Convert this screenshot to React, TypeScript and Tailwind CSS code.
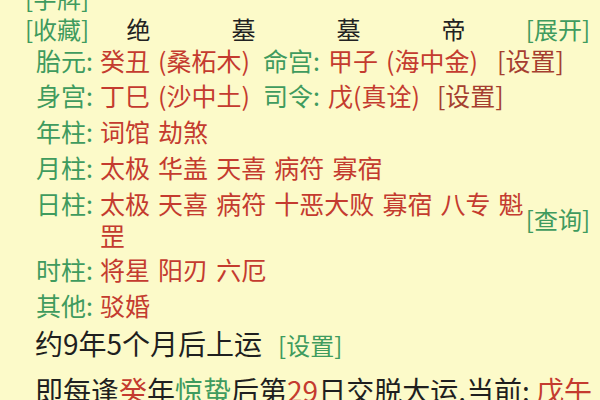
import React from "react"

const font = { fontFamily: '"Noto Sans CJK SC", "Noto Sans", sans-serif' }

function Label({ children }: { children: React.ReactNode }) {
  return <span className="inline-block w-[64px] shrink-0 whitespace-nowrap text-[#3f9b5e]">{children}</span>
}

function Red({ children }: { children: React.ReactNode }) {
  return <span className="text-[#c43b2f]">{children}</span>
}

export default function App() {
  const header = ["绝", "墓", "墓", "帝"]
  const simpleRows = [
    { label: "年柱:", value: "词馆 劫煞" },
    { label: "月柱:", value: "太极 华盖 天喜 病符 寡宿" },
  ]

  return (
    <div
      style={font}
      className="w-[600px] h-[400px] overflow-hidden bg-[#fcfac9] pl-[25px] pr-[10px] text-[25px] text-[#1f1f1f] [word-spacing:2.5px]"
    >
      {/* header */}
      <div className="flex items-end -mt-[18px] whitespace-nowrap">
        <div className="w-[61px] shrink-0 flex flex-col leading-[31px] text-[24px] text-[#3f9b5e] [word-spacing:0px]">
          <span>[字牌]</span>
          <span>[收藏]</span>
        </div>
        {header.map((h, i) => (
          <div key={i} className="w-[105px] shrink-0 text-center leading-[30px] text-[24px] text-[#222]">
            {h}
          </div>
        ))}
        <div className="flex-1 text-right leading-[30px] text-[24px] text-[#3f9b5e]">[展开]</div>
      </div>

      <div className="pl-[11px]">
        <div className="flex leading-[33px] whitespace-nowrap">
          <Label>胎元:</Label>
          <span className="inline-block w-[163px] shrink-0"><Red>癸丑 (桑柘木)</Red></span>
          <span className="inline-block w-[65px] shrink-0 text-[#3f9b5e]">命宫:</span>
          <Red>甲子 (海中金)</Red>
          <span className="ml-[19px] text-[#a53e30]">[设置]</span>
        </div>
        <div className="flex leading-[36px] whitespace-nowrap">
          <Label>身宫:</Label>
          <span className="inline-block w-[163px] shrink-0"><Red>丁巳 (沙中土)</Red></span>
          <span className="inline-block w-[65px] shrink-0 text-[#3f9b5e]">司令:</span>
          <Red>戊(真诠)</Red>
          <span className="ml-[17px] text-[#a53e30]">[设置]</span>
        </div>

        {simpleRows.map((r) => (
          <div key={r.label} className="flex leading-[36px] whitespace-nowrap">
            <Label>{r.label}</Label>
            <Red>{r.value}</Red>
          </div>
        ))}

        <div className="flex leading-[32px] mt-[2px]">
          <Label>日柱:</Label>
          <div className="flex-1 min-w-0 text-[#c43b2f]">太极 天喜 病符 十恶大败 寡宿 八专 魁罡</div>
          <span className="self-center shrink-0 whitespace-nowrap text-[24px] text-[#3f9b5e] [word-spacing:0px]">[查询]</span>
        </div>

        <div className="flex leading-[36px] whitespace-nowrap">
          <Label>时柱:</Label>
          <Red>将星 阳刃 六厄</Red>
        </div>
        <div className="flex leading-[36px] whitespace-nowrap">
          <Label>其他:</Label>
          <Red>驳婚</Red>
        </div>
      </div>

      <div className="pl-[10px] text-[28px] [word-spacing:0px] whitespace-nowrap">
        <div className="leading-[40px]">
          约9年5个月后上运
          <span className="ml-[16px] text-[24px] text-[#3f9b5e]">[设置]</span>
        </div>
        <div className="leading-[50px]">
          即每逢<Red>癸</Red>年<span className="text-[#3f9b5e]">惊蛰</span>后第<Red>29</Red>日交脱大运.当前: <Red>戊午</Red>
        </div>
      </div>
    </div>
  )
}
